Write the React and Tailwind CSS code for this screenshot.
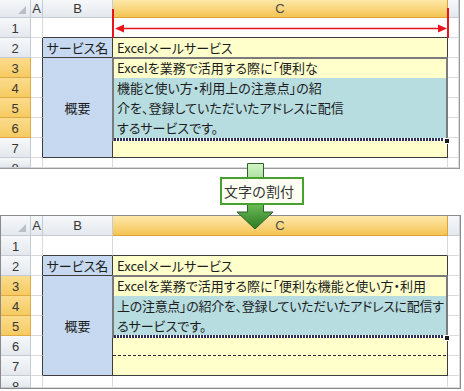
import React from "react";

const JP = "font-['Noto_Sans_CJK_JP',sans-serif] [font-feature-settings:'palt']";
const LAT = "font-['Liberation_Sans',sans-serif]";
const GRID = "border-r border-b border-[#d8dadd] bg-white";
const YEL = "bg-[#ffffcc]";
const TEAL = "bg-[#b7dde1]";
const BLUE = "bg-[#c6d9f1]";

function RowHead({ n, hl }) {
  return (
    <div
      className={`${
        hl
          ? "bg-linear-to-b from-[#fbdc8c] to-[#f6ca60] border-[#dfaa45]"
          : "bg-linear-to-b from-[#f6f8fa] to-[#e4e8ee] border-[#c5cbd3]"
      } border-r border-b flex justify-center items-start overflow-hidden text-[13px] text-[#363636] ${LAT}`}
    >
      <div className="h-[20px] leading-[21px] shrink-0">{n}</div>
    </div>
  );
}

function ColHead({ label, sel }) {
  return (
    <div
      className={`${
        sel
          ? "bg-linear-to-b from-[#fee9a8] to-[#f4c34f] border-[#dca238] text-[#4a4a4a]"
          : "bg-linear-to-b from-[#f6f8fa] to-[#e4e8ee] border-[#c5cbd3] text-[#363636]"
      } border-r border-b flex justify-center items-center text-[13px] ${LAT}`}
    >
      {label}
    </div>
  );
}

function Line({ kind }) {
  if (kind === "blue")
    return (
      <div className="h-px shrink-0 mx-[2px] bg-[repeating-linear-gradient(90deg,#1c3468_0_2px,transparent_2px_3px)]" />
    );
  if (kind === "black")
    return (
      <div className="h-px shrink-0 bg-[repeating-linear-gradient(90deg,#2a2a2a_0_3px,transparent_3px_5px)]" />
    );
  return null;
}

function CCell({ d }) {
  const bottom = d.dark ? "border-b border-[#3d3d3d]" : "border-b-0";
  return (
    <div className={`${d.bg} border-r border-r-[#3d3d3d] ${bottom} flex flex-col overflow-hidden`}>
      <div
        className={`flex-1 flex items-center pl-[4px] whitespace-nowrap text-[13px] text-[#1c1c1c] ${JP} ${d.tr || ""}`}
      >
        {d.text || ""}
      </div>
      <Line kind={d.line} />
    </div>
  );
}

function Sheet({ cls, rowsCls, hl, cData, frame, children }) {
  const cells = [];
  cells.push(
    <div
      key="corner"
      className="bg-linear-to-b from-[#f6f8fa] to-[#e4e8ee] border-r border-b border-[#c5cbd3] relative"
    >
      <svg className="absolute right-[3px] bottom-[2px]" width="9" height="9">
        <polygon points="8,0 8,8 0,8" fill="#b9bfc8" />
      </svg>
    </div>
  );
  cells.push(<ColHead key="hA" label="A" />);
  cells.push(<ColHead key="hB" label="B" />);
  cells.push(<ColHead key="hC" label="C" sel />);
  cells.push(<ColHead key="hD" label="" />);

  for (let r = 1; r <= 8; r++) {
    cells.push(<RowHead key={"rh" + r} n={r} hl={hl.includes(r)} />);
    const aDark = r >= 2 && r <= 7;
    cells.push(
      <div
        key={"a" + r}
        className={`border-b border-b-[#d8dadd] border-r bg-white ${aDark ? "border-r-[#3d3d3d]" : "border-r-[#d8dadd]"}`}
      />
    );
    if (r === 1 || r === 8) {
      cells.push(
        <div
          key={"b" + r}
          className={`border-r border-r-[#d8dadd] border-b bg-white ${r === 1 ? "border-b-[#3d3d3d]" : "border-b-[#d8dadd]"}`}
        />
      );
    } else if (r === 2) {
      cells.push(
        <div
          key="b2"
          className={`${BLUE} border-r border-b border-[#3d3d3d] flex items-center justify-center text-[13px] text-[#1c1c1c] ${JP}`}
        >
          サービス名
        </div>
      );
    } else if (r === 3) {
      cells.push(
        <div
          key="b3"
          className={`${BLUE} row-span-5 border-r border-b border-[#3d3d3d] flex items-center justify-center text-[13px] text-[#1c1c1c] ${JP}`}
        >
          概要
        </div>
      );
    }
    if (r === 1 || r === 8) {
      cells.push(
        <div
          key={"c" + r}
          className={`border-r border-r-[#d8dadd] border-b bg-white ${r === 1 ? "border-b-[#3d3d3d]" : "border-b-[#d8dadd]"}`}
        />
      );
    } else {
      cells.push(<CCell key={"c" + r} d={cData[r]} />);
    }
    cells.push(<div key={"d" + r} className={GRID} />);
  }

  return (
    <div className={cls}>
      <div className={`grid relative ${rowsCls}`}>
        {cells}
        <div
          className="absolute border-l-2 border-t-2 border-r-2 border-[#7b7b7b] flex flex-col justify-end"
          style={{ left: frame.left, top: frame.top, width: frame.width, height: frame.height }}
        >
          <div className="h-[3px] bg-[repeating-linear-gradient(90deg,#2b2f5a_0_2px,#ffffff_2px_3px)]" />
          <div className="absolute -right-[4px] -bottom-[3px] w-[6px] h-[6px] bg-[#1a1a1a] border border-white" />
        </div>
        {children}
      </div>
    </div>
  );
}

export default function App() {
  const topData = {
    2: { bg: YEL, text: "Excelメールサービス", dark: true },
    3: { bg: YEL, text: "Excelを業務で活用する際に「便利な", line: "blue" },
    4: { bg: TEAL, text: "機能と使い方・利用上の注意点」の紹", line: "blue" },
    5: { bg: TEAL, text: "介を、登録していただいたアドレスに配信", line: "blue" },
    6: { bg: TEAL, text: "するサービスです。" },
    7: { bg: YEL, dark: true },
  };
  const botData = {
    2: { bg: YEL, text: "Excelメールサービス", dark: true },
    3: { bg: YEL, text: "Excelを業務で活用する際に「便利な機能と使い方・利用", line: "blue" },
    4: {
      bg: TEAL,
      text: "上の注意点」の紹介を、登録していただいたアドレスに配信す",
      line: "blue",
      tr: "tracking-[-0.3px]",
    },
    5: { bg: TEAL, text: "るサービスです。" },
    6: { bg: YEL, line: "black" },
    7: { bg: YEL, dark: true },
  };

  return (
    <div className="relative w-[464px] h-[391px] bg-white overflow-hidden">
      <div className="flex flex-col">
        <Sheet
          cls="w-[460px] border-r border-b border-[#9a9a9a]"
          rowsCls="grid-cols-[31px_12px_70px_335px_11px] grid-rows-[18px_repeat(7,20px)_10px]"
          hl={[3, 4, 5, 6]}
          cData={topData}
          frame={{ left: 112, top: 57, width: 336, height: 84 }}
        >
          <svg className="absolute left-[110px] top-[6px]" width="342" height="34">
            <line x1="3" y1="3" x2="3" y2="32" stroke="#e8141b" strokeWidth="2" />
            <line x1="338" y1="2" x2="338" y2="32" stroke="#e8141b" strokeWidth="2" />
            <line x1="12" y1="22.5" x2="329" y2="22.5" stroke="#e8141b" strokeWidth="1.6" />
            <polygon points="5,22.5 14,18.5 14,26.5" fill="#e8141b" />
            <polygon points="337,22.5 328,18.5 328,26.5" fill="#e8141b" />
          </svg>
        </Sheet>
        <div className="h-[46px]" />
        <Sheet
          cls="w-[461px] border border-[#8a8a8a]"
          rowsCls="grid-cols-[30px_12px_70px_335px_12px] grid-rows-[20px_repeat(7,20px)_12px]"
          hl={[3, 4, 5]}
          cData={botData}
          frame={{ left: 111, top: 59, width: 336, height: 63 }}
        />
      </div>

      <svg className="absolute left-[236px] top-[162px]" width="40" height="70">
        <defs>
          <linearGradient id="g" x1="0" y1="0" x2="0" y2="1">
            <stop offset="0" stopColor="#d3f5c9" />
            <stop offset="0.6" stopColor="#6fbf5c" />
            <stop offset="1" stopColor="#2a7a20" />
          </linearGradient>
        </defs>
        <polygon
          points="11.5,1.5 27.5,1.5 27.5,50 37,50 19,67 1,50 11.5,50"
          fill="url(#g)"
          stroke="#2f5f2a"
          strokeWidth="1"
        />
      </svg>
      <div
        className={`absolute left-[220px] top-[177px] w-[84px] h-[28px] border-2 border-[#47a12f] bg-[#fdfff2] flex items-center pl-[2px] text-[14px] text-[#333] font-['Noto_Sans_CJK_JP',sans-serif]`}
      >
        文字の割付
      </div>
    </div>
  );
}
